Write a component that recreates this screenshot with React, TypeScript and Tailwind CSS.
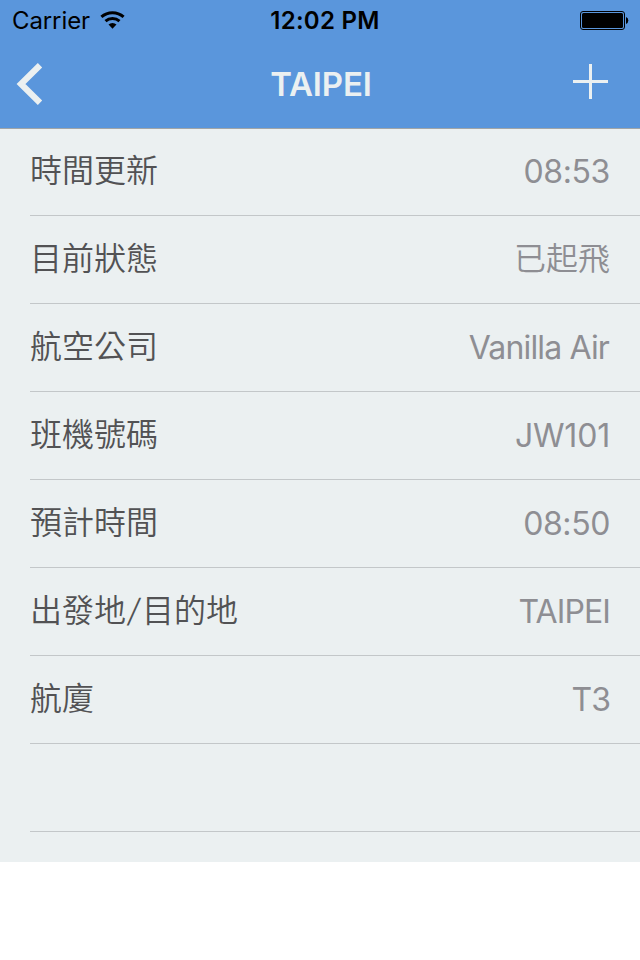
import React from "react";

type Row = { label: string; value: string; valueClass?: string };

const rows: Row[] = [
  { label: "時間更新", value: "08:53", valueClass: "tracking-[-0.4px]" },
  { label: "目前狀態", value: "已起飛", valueClass: "font-[350] pb-[2px]" },
  { label: "航空公司", value: "Vanilla Air", valueClass: "tracking-[-0.85px] pr-[1px]" },
  { label: "班機號碼", value: "JW101", valueClass: "tracking-[-0.2px]" },
  { label: "預計時間", value: "08:50", valueClass: "tracking-[-0.4px]" },
  { label: "出發地/目的地", value: "TAIPEI", valueClass: "tracking-[-0.9px]" },
  { label: "航廈", value: "T3", valueClass: "tracking-[-1px]" },
  { label: "", value: "" },
];

function StatusBar() {
  return (
    <div className="grid h-10 grid-cols-3 text-black">
      <div className="flex items-center gap-[10px] pl-3 text-[24px] leading-[42px]">
        <span className="tracking-[-0.1px]">Carrier</span>
        <svg className="mb-[2px]" width="26" height="20" viewBox="0 0 26 20" fill="none" stroke="#000" strokeWidth="3">
          <path d="M1.4 6.9a16.6 16.6 0 0 1 22.2 0" />
          <path d="M5.5 11.2a10.6 10.6 0 0 1 14 0" />
          <path d="M12.5 18.8l-4-4.2a5.8 5.8 0 0 1 8 0z" fill="#000" stroke="none" />
        </svg>
      </div>
      <div className="pl-[10px] text-center text-[24px] font-semibold leading-[42px] tracking-[0.3px]">12:02 PM</div>
      <div className="flex items-start justify-end pr-[11px] pt-[11px]">
        <svg width="49" height="19" viewBox="0 0 49 19">
          <rect x="0.5" y="0.5" width="44" height="18" rx="2.5" fill="none" stroke="#000" />
          <rect x="2" y="2" width="41" height="15" rx="1.5" fill="#000" />
          <path d="M46 6a3.8 3.8 0 0 1 0 7z" />
        </svg>
      </div>
    </div>
  );
}

// Sets the slash on the wider half-width cell used between ideographs.
function Label({ text }: { text: string }) {
  const [first, second] = text.split("/");
  return (
    <span className="pb-[2px] font-[350] text-[#525254]">
      {first}
      {second && <span className="inline-block w-4 -skew-x-[10deg] text-center font-light">/</span>}
      {second}
    </span>
  );
}

export default function App() {
  return (
    <div className="h-[960px] w-[640px] overflow-hidden bg-white font-['Inter','Noto_Sans_CJK_TC',sans-serif]">
      <header className="h-[129px] border-b border-[#a0a5a8] bg-[#5a96dc]">
        <StatusBar />
        <nav className="grid h-[88px] grid-cols-3 items-center text-[#ebf0f1]">
          <svg className="ml-[16px]" width="27" height="42" viewBox="0 0 27 42" fill="none" stroke="currentColor" strokeWidth="6.2">
            <path d="M24 2.2L5 21l19 18.8" />
          </svg>
          <h1 className="pl-[2px] text-center text-[33px] font-semibold leading-[88px] tracking-[-0.2px]">TAIPEI</h1>
          <svg className="mb-[5px] mr-8 justify-self-end" width="35" height="35" viewBox="0 0 35 35" stroke="currentColor" strokeWidth="3">
            <path d="M17.5 0v35M0 17.5h35" />
          </svg>
        </nav>
      </header>
      <main className="h-[733px] bg-[#ebf0f1] pl-[30px]">
        {rows.map((row, i) => (
          <div
            key={i}
            className={`${i === 0 ? "h-[87px]" : "h-[88px]"} flex items-center justify-between border-b border-[#c3c7c9] pr-[30px] text-[32px] leading-[48px]`}
          >
            <Label text={row.label} />
            <span className={`text-[#8e8e93] ${row.valueClass ?? ""}`}>{row.value}</span>
          </div>
        ))}
      </main>
    </div>
  );
}
